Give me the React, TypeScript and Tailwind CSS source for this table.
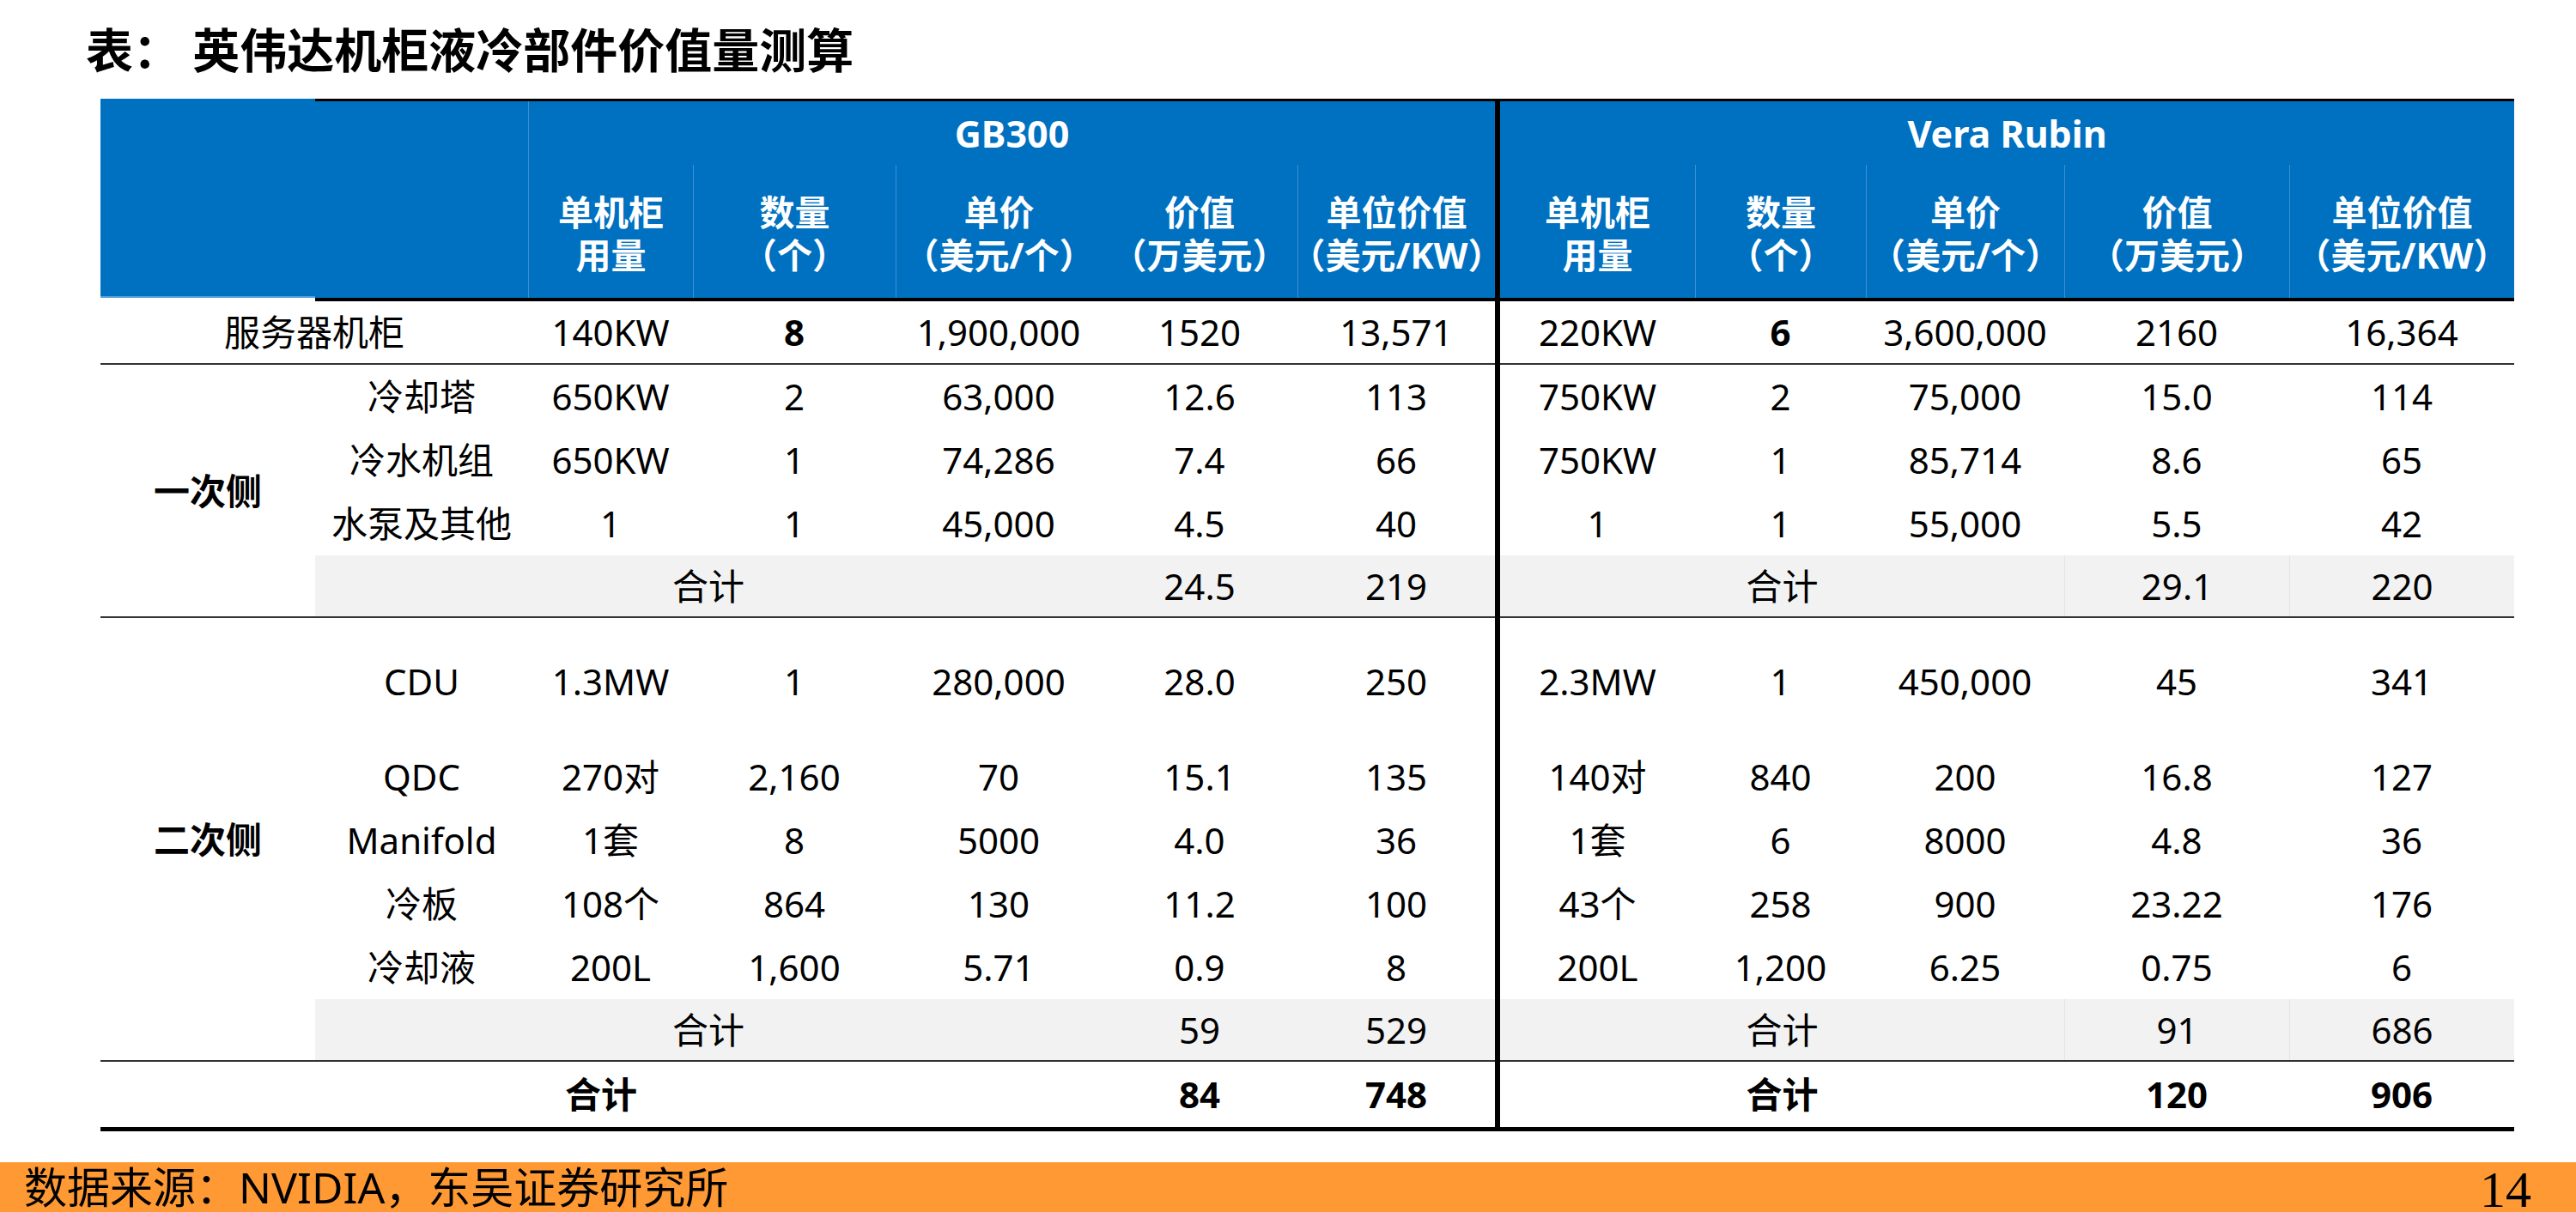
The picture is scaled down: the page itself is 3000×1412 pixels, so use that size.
import clsx from "clsx";
import type { ReactNode } from "react";

const GB_COLS = ["col-start-3", "col-start-4", "col-start-5", "col-start-6", "col-start-7"];
const VR_COLS = ["col-start-9", "col-start-10", "col-start-11", "col-start-12", "col-start-13"];

type Item = { row: string; name: string; gb: string[]; vr: string[]; server?: boolean };

const items: Item[] = [
	{
		row: "row-start-5",
		name: "服务器机柜",
		server: true,
		gb: ["140KW", "8", "1,900,000", "1520", "13,571"],
		vr: ["220KW", "6", "3,600,000", "2160", "16,364"],
	},
	{ row: "row-start-7", name: "冷却塔", gb: ["650KW", "2", "63,000", "12.6", "113"], vr: ["750KW", "2", "75,000", "15.0", "114"] },
	{ row: "row-start-8", name: "冷水机组", gb: ["650KW", "1", "74,286", "7.4", "66"], vr: ["750KW", "1", "85,714", "8.6", "65"] },
	{ row: "row-start-9", name: "水泵及其他", gb: ["1", "1", "45,000", "4.5", "40"], vr: ["1", "1", "55,000", "5.5", "42"] },
	{ row: "row-start-12", name: "CDU", gb: ["1.3MW", "1", "280,000", "28.0", "250"], vr: ["2.3MW", "1", "450,000", "45", "341"] },
	{ row: "row-start-13", name: "QDC", gb: ["270对", "2,160", "70", "15.1", "135"], vr: ["140对", "840", "200", "16.8", "127"] },
	{ row: "row-start-14", name: "Manifold", gb: ["1套", "8", "5000", "4.0", "36"], vr: ["1套", "6", "8000", "4.8", "36"] },
	{ row: "row-start-15", name: "冷板", gb: ["108个", "864", "130", "11.2", "100"], vr: ["43个", "258", "900", "23.22", "176"] },
	{ row: "row-start-16", name: "冷却液", gb: ["200L", "1,600", "5.71", "0.9", "8"], vr: ["200L", "1,200", "6.25", "0.75", "6"] },
];

const heads = [
	["单机柜", "用量"],
	["数量", "（个）"],
	["单价", "（美元/个）"],
	["价值", "（万美元）"],
	["单位价值", "（美元/KW）"],
];

function Cell({ className, children }: { className?: string; children?: ReactNode }) {
	return (
		<div className={clsx("flex items-center justify-center whitespace-nowrap", className)}>
			{children}
		</div>
	);
}

function Head({ className, lines }: { className: string; lines: string[] }) {
	return (
		<div
			className={clsx(
				"flex flex-col items-center justify-center bg-[#0070C0] pt-1 text-[41px] font-bold leading-[50px] text-white whitespace-nowrap",
				className,
			)}
		>
			{lines.map((l) => (
				<span key={l}>{l}</span>
			))}
		</div>
	);
}

export default function App() {
	return (
		<div className="relative flex h-[1412px] w-[3000px] flex-col overflow-hidden bg-white font-['Noto_Sans','Noto_Sans_CJK_SC',sans-serif] text-black">
			<h1 className="h-[115px] pl-[100px] pt-[30px] text-[55px] font-bold leading-none">
				表： 英伟达机柜液冷部件价值量测算
			</h1>

			<div className="ml-[117px] grid w-[2811px] grid-cols-[250px_248px_192px_236px_240px_228px_230px_6px_227px_199px_231px_262px_262px] grid-rows-[3px_74px_155px_4px_72px_2px_74px_74px_74px_71px_2px_148px_74px_74px_74px_74px_71px_2px_76px_5px] text-[42px] leading-none">
				{/* header */}
				<div className="col-start-1 row-start-1 row-span-3 border-b-2 border-[#5a9fdc] bg-[#0070C0]" />
				<div className="col-start-2 col-span-12 row-start-1 bg-black" />
				<div className="col-start-2 row-start-2 row-span-2 bg-[#0070C0]" />
				<Cell className="col-start-3 col-span-5 row-start-2 border-l border-[#3f8ed4] bg-[#0070C0] text-[43px] font-bold text-white">
					GB300
				</Cell>
				<Cell className="col-start-9 col-span-5 row-start-2 bg-[#0070C0] text-[43px] font-bold text-white">
					Vera Rubin
				</Cell>
				<Head className="col-start-3 row-start-3 border-l border-[#3f8ed4]" lines={heads[0]} />
				<Head className="col-start-4 row-start-3 border-l border-[#3f8ed4]" lines={heads[1]} />
				<Head className="col-start-5 row-start-3 border-l border-[#3f8ed4]" lines={heads[2]} />
				<Head className="col-start-6 row-start-3" lines={heads[3]} />
				<Head className="col-start-7 row-start-3 border-l border-[#3f8ed4]" lines={heads[4]} />
				<Head className="col-start-9 row-start-3" lines={heads[0]} />
				<Head className="col-start-10 row-start-3 border-l border-[#3f8ed4]" lines={heads[1]} />
				<Head className="col-start-11 row-start-3 border-l border-[#3f8ed4]" lines={heads[2]} />
				<Head className="col-start-12 row-start-3 border-l border-[#3f8ed4]" lines={heads[3]} />
				<Head className="col-start-13 row-start-3 border-l border-[#3f8ed4]" lines={heads[4]} />
				<div className="col-start-2 col-span-12 row-start-4 bg-black" />

				{/* rules and shaded subtotal rows */}
				<div className="col-start-1 col-span-13 row-start-6 bg-[#333]" />
				<div className="col-start-2 col-span-12 row-start-10 bg-[#F2F2F2]" />
				<div className="col-start-1 col-span-13 row-start-11 bg-[#333]" />
				<div className="col-start-2 col-span-12 row-start-17 bg-[#F2F2F2]" />
				<div className="col-start-1 col-span-13 row-start-18 bg-[#333]" />
				<div className="col-start-1 col-span-13 row-start-20 bg-black" />

				{/* group labels */}
				<Cell className="col-start-1 row-start-7 row-span-4 font-bold">一次侧</Cell>
				<Cell className="col-start-1 row-start-12 row-span-6 font-bold">二次侧</Cell>

				{items.map((it) => (
					<div key={it.name} className="contents">
						<Cell className={clsx(it.row, it.server ? "col-start-1 col-span-2" : "col-start-2")}>
							{it.name}
						</Cell>
						{it.gb.map((v, i) => (
							<Cell key={"g" + i} className={clsx(it.row, GB_COLS[i], it.server && i === 1 && "font-bold")}>
								{v}
							</Cell>
						))}
						{it.vr.map((v, i) => (
							<Cell key={"v" + i} className={clsx(it.row, VR_COLS[i], it.server && i === 1 && "font-bold")}>
								{v}
							</Cell>
						))}
					</div>
				))}

				{/* subtotals */}
				<Cell className="col-start-2 col-span-4 row-start-10">合计</Cell>
				<Cell className="col-start-6 row-start-10">24.5</Cell>
				<Cell className="col-start-7 row-start-10">219</Cell>
				<Cell className="col-start-9 col-span-3 row-start-10">合计</Cell>
				<Cell className="col-start-12 row-start-10 border-l border-[#e4e4e4]">29.1</Cell>
				<Cell className="col-start-13 row-start-10 border-l border-[#e4e4e4]">220</Cell>

				<Cell className="col-start-2 col-span-4 row-start-17">合计</Cell>
				<Cell className="col-start-6 row-start-17">59</Cell>
				<Cell className="col-start-7 row-start-17">529</Cell>
				<Cell className="col-start-9 col-span-3 row-start-17">合计</Cell>
				<Cell className="col-start-12 row-start-17 border-l border-[#e4e4e4]">91</Cell>
				<Cell className="col-start-13 row-start-17 border-l border-[#e4e4e4]">686</Cell>

				{/* grand total */}
				<Cell className="col-start-1 col-span-5 row-start-19 font-bold">合计</Cell>
				<Cell className="col-start-6 row-start-19 font-bold">84</Cell>
				<Cell className="col-start-7 row-start-19 font-bold">748</Cell>
				<Cell className="col-start-9 col-span-3 row-start-19 font-bold">合计</Cell>
				<Cell className="col-start-12 row-start-19 font-bold">120</Cell>
				<Cell className="col-start-13 row-start-19 font-bold">906</Cell>

				{/* GB300 | Vera Rubin divider */}
				<div className="z-10 col-start-8 row-start-1 row-span-20 bg-black" />
			</div>

			<footer className="mt-auto flex h-[58px] items-center justify-between overflow-hidden bg-[#FF9933]">
				<span className="pl-[28px] text-[50px] leading-[50px]">数据来源：NVIDIA，东吴证券研究所</span>
				<span className="pr-[52px] pt-[6px] font-['Liberation_Serif',serif] text-[60px] leading-[52px]">
					14
				</span>
			</footer>
		</div>
	);
}
